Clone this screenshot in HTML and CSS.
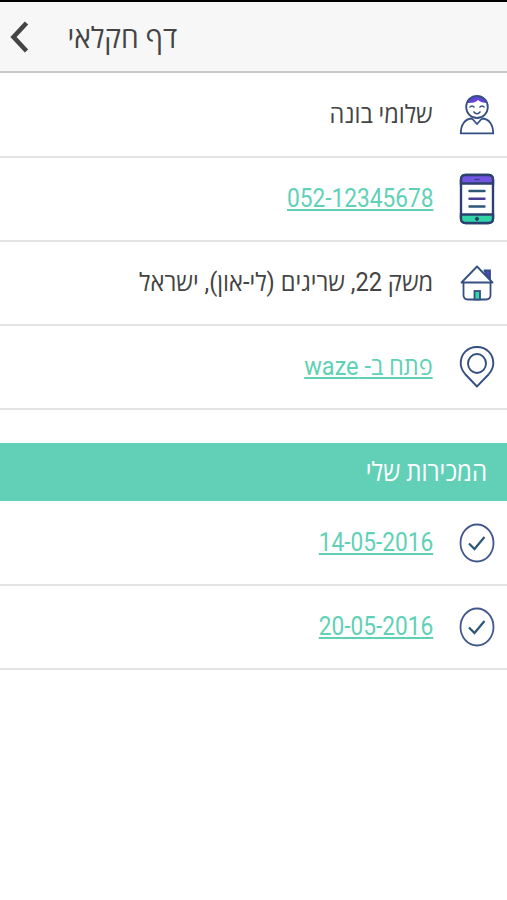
FILE: index.html
```html
<!DOCTYPE html>
<html lang="he" dir="rtl">
<head>
<meta charset="UTF-8">
<meta name="viewport" content="width=device-width, initial-scale=1.0">
<title>דף חקלאי</title>
<link rel="stylesheet" href="styles.css">
</head>
<body>

<header class="header">
    <h1 class="title">דף חקלאי</h1>
    <svg class="back" width="20" height="34" viewBox="0 0 20 34" fill="none" stroke="#444" stroke-width="4.600">
        <path d="M16.500 3 3.500 17 16.500 31"/>
    </svg>
</header>

<ul class="list details">
    <li class="row">
        <svg class="icon" width="38" height="52" viewBox="0 0 38 52" fill="none" stroke="#354f82" stroke-width="1.8">
            <path d="M9 13C10 5 28 5 29.500 14C25 14 22 13 20 11C17 14 13 14 9 14Z" fill="#6544d8" stroke="none"/>
            <ellipse cx="19" cy="18" rx="10.800" ry="11"/>
            <path d="M11.500 18.500q2.500-3 5 0M21.500 18.500q2.500-3 5 0M15.500 22.500q3.500 4.500 7 0" stroke-width="1.300"/>
            <path d="M14 29.500C7 29.500 2.800 36 2.800 44.300H35.200C35.200 36 31 29.500 24 29.500M14 29.500l5 5.500 5-5.500"/>
        </svg>
        <span class="label name">שלומי בונה</span>
    </li>
    <li class="row">
        <svg class="icon" width="38" height="52" viewBox="0 0 38 52" fill="none" stroke="#2b4170" stroke-width="2.4">
            <rect x="3" y="2" width="32" height="48" rx="4.500" fill="#fff"/>
            <path d="M3 10.500V6.500Q3 2 7.500 2H30.500Q35 2 35 6.500V10.500Z" fill="#7455e2"/>
            <path d="M3 41.500H35V45.500Q35 50 30.500 50H7.500Q3 50 3 45.500Z" fill="#31d5a5"/>
            <path d="M16.500 6.500h5" stroke-width="1.200"/>
            <circle cx="19" cy="45.800" r="1.600" fill="#2b4170" stroke-width="1"/>
            <path d="M11.500 18h15M11.500 33.500h15" stroke="#2d5878" stroke-linecap="round"/>
            <path d="M11.500 25.700h15" stroke="#483f93" stroke-linecap="round"/>
        </svg>
        <a class="label phone" href="tel:05212345678">052-12345678</a>
    </li>
    <li class="row">
        <svg class="icon" width="38" height="52" viewBox="0 0 38 52" fill="none" stroke="#354f82" stroke-width="1.800">
            <path d="M26.500 14V13.500H32V23Z" fill="#5a42d6"/>
            <path d="M5.500 26V38Q5.500 42.500 10 42.500H28Q32.500 42.500 32.500 38V26"/>
            <path d="M19 9.500 3.500 25.500H34.500Z" fill="#fff" stroke-linejoin="round"/>
            <rect x="16.500" y="34" width="5.500" height="8.500" fill="#31d5a5"/>
        </svg>
        <span class="label address">משק 22, שריגים (לי-און), ישראל</span>
    </li>
    <li class="row">
        <svg class="icon" width="38" height="52" viewBox="0 0 38 52" fill="none" stroke="#354f82" stroke-width="1.900">
            <path d="M19 45.500 7.500 33.500C4.500 30 2.700 26.500 2.700 22.500C2.700 13 9.500 6 19 6S35.300 13 35.300 22.500C35.300 26.500 33.500 30 30.500 33.500Z"/>
            <ellipse cx="19" cy="22.500" rx="9" ry="9.500"/>
        </svg>
        <a class="label waze" href="#">פתח ב- waze</a>
    </li>
</ul>

<h2 class="section"><span class="section-text">המכירות שלי</span></h2>

<ul class="list sales">
    <li class="row">
        <svg class="icon" width="38" height="52" viewBox="0 0 38 52" fill="none" stroke="#42588c" stroke-width="1.800">
            <ellipse cx="19" cy="26" rx="16.500" ry="18.500"/>
            <path d="M11 26.500 16.500 32 26.500 20" stroke="#2d5878" stroke-width="2.200"/>
        </svg>
        <a class="label date" href="#">14-05-2016</a>
    </li>
    <li class="row">
        <svg class="icon" width="38" height="52" viewBox="0 0 38 52" fill="none" stroke="#42588c" stroke-width="1.800">
            <ellipse cx="19" cy="26" rx="16.500" ry="18.500"/>
            <path d="M11 26.500 16.500 32 26.500 20" stroke="#2d5878" stroke-width="2.200"/>
        </svg>
        <a class="label date" href="#">20-05-2016</a>
    </li>
</ul>

</body>
</html>
```
FILE: styles.css
```css
* {
    box-sizing: border-box;
}

body {
    font-family: Roboto, "Open Sans", "Noto Sans", sans-serif;
    background-color: #fff;
    color: #444;
    margin: 0;
    padding: 0;
    overflow-x: hidden;
}

.header {
    display: flex;
    align-items: center;
    justify-content: space-between;
    height: 73px;
    padding: 0 330px 0 10px;
    border-top: 2px solid #000;
    border-bottom: 2px solid #c9c9c9;
    background-color: #f7f7f7;
}

.title {
    margin: 0;
    font-size: 29px;
    font-weight: normal;
    white-space: nowrap;
    transform: scaleX(0.97);
    transform-origin: right;
}

.back {
    flex: none;
}

.list {
    list-style: none;
    margin: 0;
    padding: 0;
}

.details,
.sales {
    padding-top: 1px;
}

.row {
    display: flex;
    align-items: center;
    height: 84px;
    padding: 0 11px;
    border-bottom: 2px solid #e4e4e4;
}

.icon {
    flex: none;
    margin-left: 25px;
}

.label {
    font-size: 25px;
    line-height: 30px;
    white-space: nowrap;
    transform: scaleX(0.94);
    transform-origin: right;
}

.address {
    transform: scaleX(0.945);
}

.phone,
.date {
    transform: scaleX(0.907);
}

a.label {
    color: #60d1b6;
    text-decoration: underline;
    text-decoration-thickness: 2px;
    text-underline-offset: 2px;
}

.section {
    display: flex;
    align-items: center;
    height: 58px;
    margin: 33px 0 0;
    padding: 0 20px 2px;
    background-color: #61d0b7;
    color: #fff;
    font-size: 26px;
    font-weight: normal;
}

.section-text {
    transform: scaleX(0.925);
    transform-origin: right;
}
```
